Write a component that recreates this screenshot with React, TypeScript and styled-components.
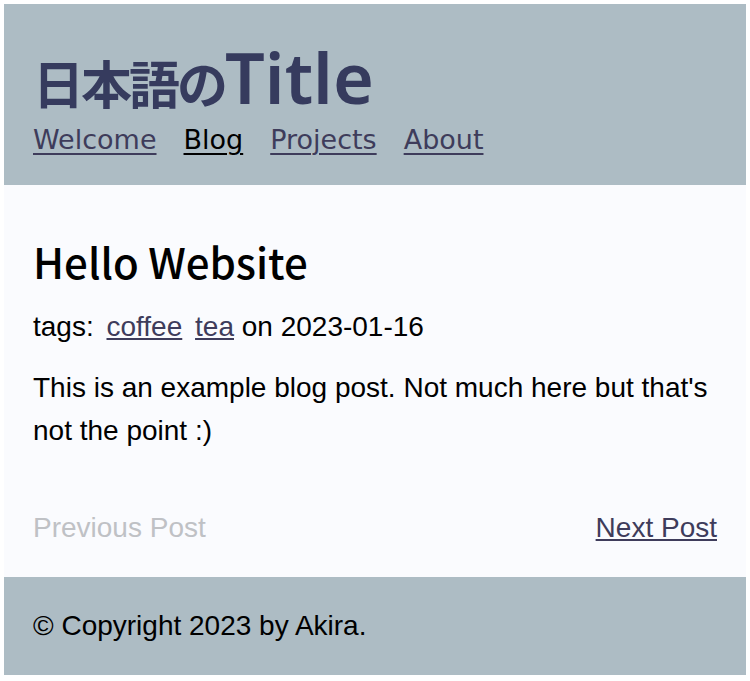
import React from 'react'
import styled, { createGlobalStyle } from 'styled-components'

const GlobalStyle = createGlobalStyle`
  html, body {
    margin: 0;
    padding: 0;
    background: #ffffff;
  }
  body {
    margin: 4px;
    font-family: 'Liberation Sans', Arial, sans-serif;
    color: #000;
  }
`

const linkColor = '#3e3c5b'
const barColor = '#adbcc4'

const Page = styled.div`
  display: flex;
  flex-direction: column;
`

const Header = styled.header`
  background: ${barColor};
  padding: 35px 29px 28px;
`

const Title = styled.h1`
  margin: 0;
  font-family: 'Noto Sans', sans-serif;
  font-weight: 600;
  font-size: 70px;
  line-height: 76px;
  color: #363b5e;
`

// the japanese part is set tighter than the latin part
const TitleJa = styled.span`
  font-family: 'Noto Sans CJK JP', sans-serif;
  font-weight: 700;
  font-size: 51px;
  letter-spacing: -3px;
`

const Nav = styled.nav`
  display: flex;
  gap: 27px;
  margin-top: 2px;
`

const NavLink = styled.a<{ $active?: boolean }>`
  font-family: 'DejaVu Sans', Verdana, sans-serif;
  font-size: 27px;
  line-height: 35px;
  color: ${(props) => (props.$active ? '#000' : linkColor)};
  text-decoration: underline;
  text-underline-offset: 4px;
  text-decoration-thickness: 2px;
`

const Main = styled.main`
  background: #fafbfe;
  padding: 51px 29px 28px;
`

const PostTitle = styled.h2`
  margin: 0 0 19px;
  font-family: 'Noto Sans CJK JP', 'Noto Sans', sans-serif;
  font-weight: 500;
  font-size: 42px;
  line-height: 50px;
`

const Meta = styled.div`
  font-size: 28px;
  line-height: 43px;
`

const TagLink = styled.a`
  margin-left: 5px;
  color: ${linkColor};
  text-decoration: underline;
`

const Body = styled.p`
  margin: 18px 0 0;
  font-size: 28px;
  line-height: 43px;
`

const Pager = styled.div`
  display: flex;
  justify-content: space-between;
  align-items: baseline;
  margin-top: 54px;
  font-size: 28px;
  line-height: 43px;
`

const PagerLink = styled.a<{ $disabled?: boolean }>`
  color: ${(props) => (props.$disabled ? '#bfc1c5' : linkColor)};
  text-decoration: ${(props) => (props.$disabled ? 'none' : 'underline')};
`

const Footer = styled.footer`
  background: ${barColor};
  padding: 27px 29px 28px;
  font-size: 28px;
  line-height: 43px;
`

export default function App() {
  return (
    <>
      <GlobalStyle />
      <Page>
        <Header>
          <Title>
            <TitleJa>日本語の</TitleJa>Title
          </Title>
          <Nav>
            <NavLink href="#">Welcome</NavLink>
            <NavLink href="#" $active>
              Blog
            </NavLink>
            <NavLink href="#">Projects</NavLink>
            <NavLink href="#">About</NavLink>
          </Nav>
        </Header>
        <Main>
          <PostTitle>Hello Website</PostTitle>
          <Meta>
            tags: <TagLink href="#">coffee</TagLink>{' '}
            <TagLink href="#">tea</TagLink> on 2023-01-16
          </Meta>
          <Body>
            This is an example blog post. Not much here but that's not the
            point :)
          </Body>
          <Pager>
            <PagerLink $disabled>Previous Post</PagerLink>
            <PagerLink href="#">Next Post</PagerLink>
          </Pager>
        </Main>
        <Footer>© Copyright 2023 by Akira.</Footer>
      </Page>
    </>
  )
}
